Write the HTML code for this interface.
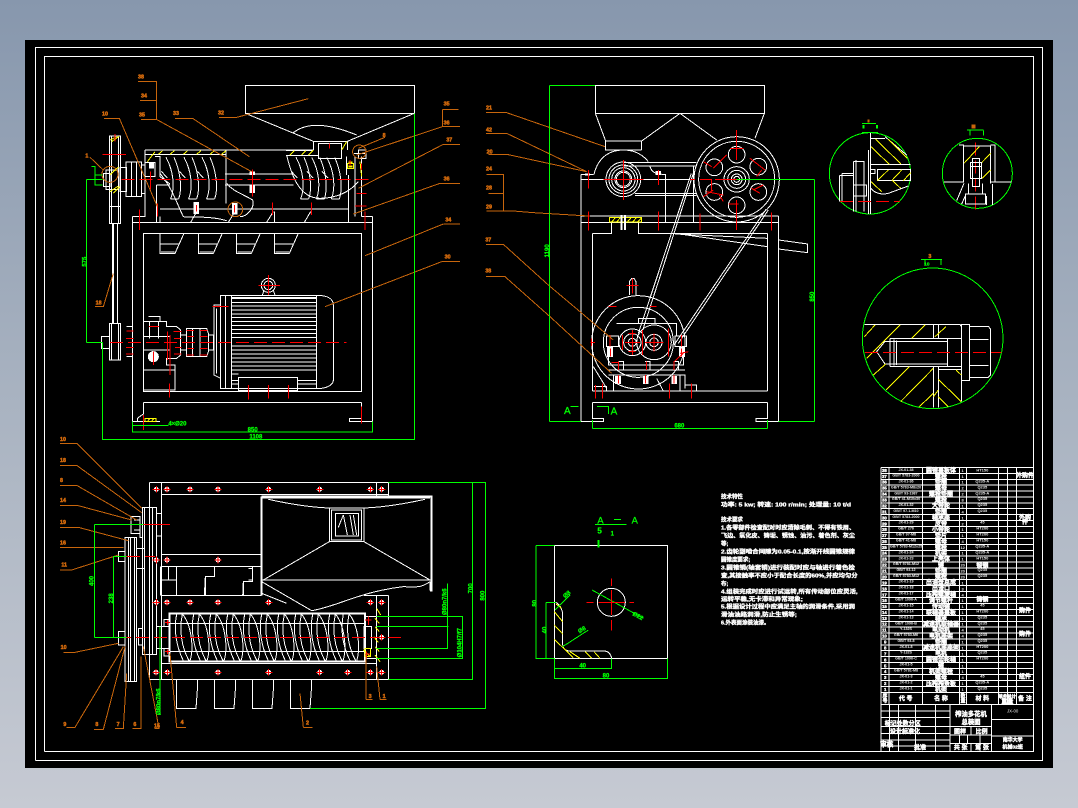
<!DOCTYPE html>
<html><head><meta charset="utf-8"><title>装配图</title>
<style>
html,body{margin:0;padding:0;width:1078px;height:808px;overflow:hidden;background:linear-gradient(180deg,#8797ad 0%,#a9b3c1 50%,#c6cad3 100%)}
svg{position:absolute;left:0;top:0;display:block}
svg *{vector-effect:non-scaling-stroke}
path,circle,rect,ellipse{fill:none;stroke-width:1;shape-rendering:crispEdges}
.w{stroke:#fff}.r{stroke:#f00}.g{stroke:#0f0}.o{stroke:#c8660c}.y{stroke:#ff0}
.d{stroke-dasharray:13 5}
.fw{fill:#fff;stroke:#fff}
text{font-family:"Liberation Sans","Noto Sans CJK SC",sans-serif;font-weight:bold}
.tg{fill:#0f0;stroke:#0f0;stroke-width:.25px;font-size:18px}
.to{fill:#d0680c;stroke:#d0680c;stroke-width:.5px;font-size:16px}
.tw{fill:#fff;stroke:#fff;stroke-width:.35px;font-size:16.5px}
.s{fill:#e8e8e8;font-size:11px;font-weight:normal}
.n{fill:#fff;stroke:#fff;stroke-width:.4px;font-size:18px;text-anchor:middle}
.m{text-anchor:middle}
</style></head>
<body>
<svg width="1078" height="808" viewBox="0 0 1078 808" xmlns="http://www.w3.org/2000/svg">
<defs>
<g id="b"><circle cx="0" cy="0" r="6" style="fill:#fff;stroke:#fff"/><path class="r" d="M-11,0H11M0,-10V10"/></g>
<g id="f"><path class="w" d="M0,0C22,40 28,90 14,125M24,0C42,40 50,90 38,125M-14,42L4,62M14,125L38,125"/></g>
<g id="h"><path class="w" d="M5,0C-5,50 5,100 25,140M22,0C12,50 20,100 42,140M22,0C48,30 58,100 45,140"/></g>
<g id="t"><path class="w" d="M0,0V60H45L72,0M0,32H58M3,56H44"/></g>
<g id="tr"><path class="w" d="M0,0V85H58L62,30V0"/></g>
</defs>
<rect x="25" y="40" width="1028" height="728" style="fill:#000;stroke:none"/>
<path class="w" d="M35.5,760.5V47.5H1042.5V760.5H35.5"/>
<path class="w" d="M44.5,751.5V56.5H1033.5V751.5H44.5"/>

<!-- LEFT VIEW -->
<g transform="translate(60,60) scale(.33333)">
<path class="w" d="M556,76H1063V160H556ZM556,160L760,244M1063,160L862,244M700,218C730,195 780,180 890,225M760,244V270M862,244V270M760,244H862M775,250H845V295H775Z"/>
<path class="w" d="M255,270H760M255,283H498M678,272H760M678,286H775M255,270V470H217M498,270V430"/>
<path class="w" d="M148,228H182V490H148ZM155,228V490M175,228V490M148,440H182M157,490V790M161,490V790M173,490V790M148,790H182V900H148ZM155,790V900M175,790V900"/>
<path class="w" d="M130,340H150V380H130ZM138,330H175V388H138ZM180,322H200V395H180ZM198,306H245V410H198ZM215,306V410M230,306V410M245,315H255V400H245M255,308H285V350H255M285,290H300V350L330,372M289,375H330M289,375V487M300,447H865M300,470V487"/>
<use href="#f" x="318" y="292"/><use href="#f" x="372" y="292"/><use href="#f" x="426" y="292"/>
<use href="#f" x="708" y="292"/><use href="#f" x="755" y="292"/><use href="#f" x="800" y="292"/>
<path class="w" d="M300,340C340,390 350,430 370,470C395,475 440,465 500,482M495,342H700M495,375H700M500,370C520,395 545,400 578,420C585,445 560,470 540,470M680,285C695,350 720,415 780,415C830,415 870,395 895,365M860,290V345M885,290V470M905,290V470M865,345V487M895,270H918V295H895ZM882,280H915"/>
<path class="w" d="M644,455V487M620,487L640,455M733,487L752,455M392,487L410,455M505,487L525,455M217,487H938M938,470H905M217,470V1085M938,470V1085M250,520H905V995H250Z"/>
<use href="#t" x="300" y="520"/><use href="#t" x="415" y="520"/><use href="#t" x="529" y="520"/><use href="#t" x="643" y="520"/>
<!-- motor -->
<path class="w" d="M482,706H770C800,706 820,715 820,735V960C820,975 800,986 770,986H482ZM496,706V986M514,706V986M770,706V986M482,735H462V945L482,955M470,745V940M535,952H712V992H535ZM607,706L612,690M645,706L640,690"/>
<path class="w" d="M514,712H770M514,716H770M514,727H770M514,738H770M514,750H770M514,762H770M514,773H770M514,785H770M514,797H770M514,808H770M514,820H770M514,832H770M514,858H770M514,870H770M514,882H770M514,894H770M514,906H770M514,918H770M514,930H770M514,942H535M712,962H770M712,972H770M514,962H535M514,972H535"/>
<circle class="w" cx="625" cy="676" r="21"/><circle class="w" cx="625" cy="676" r="13"/>
<path class="w" d="M250,785H320V800H350L362,810V885L350,895H320V915H345V990H250M250,830H330M250,870H330M250,930H345M250,790V995M268,785V835M295,785V835M265,770H300V785M380,805H440L445,820V875L440,890H380ZM398,805V890M420,805V890M445,825H460V870H445M362,825H380V870H362M200,800H217V890H200M125,830H148V866H125Z"/>
<circle class="fw" cx="280" cy="890" r="15"/>
<!-- lower frame -->
<path class="w" d="M250,995H905M250,1027H905M250,1027V1062L232,1075V1085M905,1027V1075H868V1085H938M217,1085H300"/>
<rect class="fw" x="402" y="428" width="14" height="32"/><rect class="fw" x="517" y="430" width="14" height="32"/><rect class="fw" x="570" y="378" width="14" height="20"/><rect class="fw" x="570" y="336" width="14" height="8"/><rect class="fw" x="268" y="310" width="12" height="14"/>
<path class="y" d="M255,1075H288V1085H255ZM262,1085L270,1075M274,1085L282,1075M150,240L170,230M155,245L178,228M155,340L175,322M150,345L170,325M150,395L175,378M160,400L180,380M262,305L285,275M295,283L308,272M330,283L343,272M370,283L383,272M410,283L423,272M450,283L463,272M485,283L498,272M690,285L703,272M725,285L738,272M745,285L760,270M845,270L860,245M862,310H880V325H862ZM900,305L905,350"/>
<path class="y" style="stroke-width:2" d="M865,308H878M865,320H878"/>
<path class="r d" d="M185,358H935M150,847H860"/>
<path class="r" d="M128,283H198M165,222V245M577,328V410M272,335V388M238,448V510M292,430V470M637,427V465M754,427V465M915,455V510M885,438H920M890,400H920M905,310V330M625,645V705M595,676H660M458,740H505M565,975V1018M625,975V1015M685,975V1015M328,970V1012M330,825V945M322,815V900M200,813H220M198,836H220M198,862H220M198,882H220M340,815H365M342,835H365M345,862H365M342,882H365M380,812H402M382,830H402M382,865H402M380,885H402M420,812H442M420,830H442M420,865H442M420,885H442M267,800H297M280,875V915M250,1065V1110M905,1040V1090M808,250V265M870,300V318M409,435V455M523,435V458"/>
<circle class="o" cx="150" cy="343" r="24"/><circle class="o" cx="526" cy="448" r="22"/><circle class="o" cx="898" cy="275" r="20"/>
<path class="o" d="M234,64H289V178M240,122H289M243,178H289L575,335M345,175H398L568,290M477,172H530L745,116M132,175H178L292,440M90,292L130,330M1147,148H1195M1147,148V200H1200M1147,200L890,285M975,232L895,265M1150,253H1200M1150,253L895,385M1140,370H1200M1140,370L880,462M1150,492H1200M1150,492L915,587M1145,605H1200M1145,605L795,740M105,740H130L160,640M0,1150H50L100,1200"/>
<g class="to"><text x="234" y="56">38</text><text x="243" y="112">34</text><text x="237" y="170">35</text><text x="339" y="165">33</text><text x="474" y="163">32</text><text x="126" y="166">10</text><text x="76" y="293">1</text><text x="1151" y="136">35</text><text x="1151" y="193">36</text><text x="968" y="231">8</text><text x="1159" y="244">37</text><text x="1151" y="361">36</text><text x="1156" y="485">34</text><text x="1154" y="595">30</text><text x="107" y="733">18</text><text x="0" y="1143">10</text></g>
<path class="g" d="M80,358V847M80,358H128M80,847H128M128,847V1138H1063V160M217,1085V1116H938V1085M217,1096H325M95,320H105V375H128M106,345H128"/>
<g class="tg"><text transform="translate(80,620) rotate(-90)">575</text><text x="325" y="1096">4×Ø20</text><text x="563" y="1115">850</text><text x="568" y="1136">1108</text></g>
</g>

<!-- FRONT VIEW -->
<g transform="translate(470,60) scale(.33333)">
<path class="w" d="M376,76H883V160H376ZM376,160L407,243M883,160L855,235M630,160L515,243M630,160L740,240M407,243H515V270M407,243V270H515M372,343C385,290 420,270 460,270C490,270 515,280 535,305M460,307H680M460,318H680M495,400H680M495,407H680M540,320C545,335 555,343 580,343H587V487"/>
<path class="w" d="M333,343H370M333,343V1084M925,468V1084M333,487H925M333,468H925M333,358H670M670,318V487M367,520H425V487M505,487V520H892M367,520V993M892,520V993M367,993H892M367,1027H892M367,1027V1075H400V1084H333M892,1027V1075H858V1084H925M615,522L892,535M630,522L892,560M926,540L1013,552V578L926,567"/>
<circle class="w" cx="460" cy="358" r="52"/><circle class="w" cx="460" cy="358" r="43"/><circle class="w" cx="460" cy="358" r="35"/><circle class="w" cx="460" cy="358" r="25"/><circle class="w" cx="460" cy="358" r="21"/>
<circle class="w" cx="800" cy="358" r="128"/><circle class="w" cx="800" cy="358" r="114"/>
<circle class="w" cx="800" cy="358" r="38"/><circle class="w" cx="800" cy="358" r="27"/><circle class="w" cx="800" cy="358" r="16"/><circle class="w" cx="800" cy="358" r="9"/>
<circle class="w" cx="800" cy="284" r="25"/><circle class="w" cx="733" cy="322" r="25"/><circle class="w" cx="733" cy="396" r="25"/><circle class="w" cx="800" cy="436" r="25"/><circle class="w" cx="865" cy="396" r="25"/><circle class="w" cx="865" cy="320" r="25"/>
<path class="w" d="M670,340L515,820M664,340L505,820M895,450L625,850M888,448L612,855"/>
<path class="w" d="M478,705V665L485,655H492L498,665V705"/>
<circle class="w" cx="505" cy="847" r="140"/><circle class="w" cx="505" cy="847" r="105"/>
<circle class="w" cx="552" cy="847" r="52"/><circle class="w" cx="552" cy="847" r="24"/><circle class="w" cx="552" cy="847" r="13"/>
<circle class="w" cx="487" cy="847" r="40"/><circle class="w" cx="487" cy="847" r="26"/><circle class="w" cx="487" cy="847" r="12"/>
<path class="w" d="M440,790H620V830M410,828H445V860H410ZM615,828H650V860H615ZM415,860V915H640V860M415,915H640M415,930H645M415,945H645V985M430,945V993M630,945V993M560,955L580,993M445,905H460V930M610,905H625V930M525,905H540V930M505,790V775H555V790M645,975H680V993M372,980H410V993M370,920L410,985"/>
<rect class="fw" x="412" y="862" width="16" height="28"/><rect class="fw" x="628" y="862" width="16" height="28"/><rect class="fw" x="437" y="950" width="14" height="20"/><rect class="fw" x="520" y="950" width="14" height="20"/><rect class="fw" x="606" y="950" width="14" height="20"/><rect class="fw" x="558" y="335" width="14" height="8"/>
<path class="y" d="M418,472H515V486H418ZM425,486L437,472M440,486L452,472M472,486L484,472M488,486L500,472M503,486L515,474"/>
<path class="w" style="stroke-width:2" d="M455,465V510M465,465V510M345,343H360"/>
<path class="r" d="M460,300V420M400,358H520M800,210V300M800,420V510M660,358H675M735,358H865M690,358L725,358V395M710,395L760,405M730,325L770,285M700,305L725,320M775,432H805M780,265H820M840,295L885,330M845,385L870,400M850,390L880,375M860,350L875,330M700,410L730,390M748,405L760,425M355,330V385M565,330V375M355,455V512M565,455V512M690,460V512M904,457V512M350,468H360M362,847H375M365,835V858M487,810V885M465,847H510M475,820H497M475,875H497M457,825V870M552,820V875M525,847H580M518,810V885M596,805V890M595,845V870M420,825V860M635,825V860M422,865V890M635,865V890M425,907H445M445,905V930M530,905V930M612,905V930M376,975V1015M397,970V1015M598,970V1015M664,970V1015M445,945V970M527,945V970M612,945V970M470,677H505M487,655V700M415,740H440M540,740H560M630,880L655,875M612,905L640,880"/>
<path class="o" d="M48,157H107L405,260M48,220H110L350,335M55,284H115L350,335M50,343H100V453M55,400H100M50,453H130L190,458L355,468M48,553H100L235,675L330,755L430,840M48,650H105L240,770L425,940"/>
<g class="to"><text x="48" y="149">21</text><text x="48" y="214">42</text><text x="50" y="280">20</text><text x="48" y="332">24</text><text x="48" y="388">28</text><text x="48" y="445">29</text><text x="46" y="545">37</text><text x="46" y="638">38</text></g>
<path class="g" d="M238,76V1084M238,76H375M238,1084H333M1033,358V1084M800,358H1033M925,1084H1033M367,1105H892M367,1080V1105M892,1080V1105M302,1040H326M381,1040H415V1062"/>
<g class="tg"><text transform="translate(237,592) rotate(-90)">1190</text><text transform="translate(1032,725) rotate(-90)">850</text><text x="613" y="1103">680</text><text x="282" y="1062" style="font-size:30px;font-weight:normal">A</text><text x="422" y="1064" style="font-size:30px;font-weight:normal">A</text></g>
</g>

<!-- TOP VIEW -->
<g transform="translate(60,450) scale(.33333)">
<path class="w" d="M268,97H985V137M268,97V688H985V437M304,97V688M949,97V137M304,133H985M304,313H605M304,349H605M304,437H605M949,437V688M912,437H985M304,640H949"/>
<path class="w" style="stroke-width:2" d="M605,140H1115V422H1110M605,140V437M605,143H1110"/>
<path class="w" d="M808,174H912V275H808ZM815,180H905V270H815ZM826,190H895V258H826ZM625,148C680,160 750,172 808,174M1095,148C1040,160 970,172 912,174M610,390L808,275M1110,390L912,275M605,390H1115M605,395L755,482C830,470 900,425 1030,410C1075,412 1085,412 1110,395M1110,395V422M605,430L680,460M835,232L850,195M850,195L862,255M870,195L880,255M880,195L890,255"/>
<path class="w" d="M302,349V437M302,390H350V437M350,349V437M325,349V390M433,437L436,380H463V349M436,380V437M463,380H436M548,437L550,395H578V349M550,395V437M566,355H578V390H566"/>
<path class="w" style="stroke-width:2" d="M328,490H915V634H328Z"/>
<use href="#h" x="345" y="492"/><use href="#h" x="396" y="492"/><use href="#h" x="447" y="492"/><use href="#h" x="498" y="492"/><use href="#h" x="549" y="492"/><use href="#h" x="600" y="492"/><use href="#h" x="651" y="492"/><use href="#h" x="702" y="492"/><use href="#h" x="753" y="492"/><use href="#h" x="804" y="492"/><use href="#h" x="845" y="492"/>
<path class="w" d="M330,520H912M330,605H912M912,500H950V625H912M912,530H935V595H912ZM312,508H330V530H312ZM312,595H330V618H312ZM300,530H330V595H300"/>
<path class="w" d="M247,172H290V614H247ZM253,172V614M268,172V614M278,172V614M290,190H304V258H290M213,200H240V250H213ZM222,210H240V240H222M240,200V262H247M205,262H230V695H205ZM195,262H205V695H195ZM212,262V695M224,262V695M230,295H253V355H230M175,305H195V335H175ZM175,545H195V585H175ZM235,535H247V585H235ZM290,530H300V595H290"/>
<path class="y" d="M950,475L962,495M945,505L958,520M945,530L958,545M942,560L955,578M945,590L958,605M945,615L960,635M910,600L930,620M915,595H932V620H915Z"/>
<use href="#tr" x="350" y="690"/><use href="#tr" x="464" y="690"/><use href="#tr" x="578" y="690"/><use href="#tr" x="692" y="690"/>
<use href="#b" x="289" y="118"/><use href="#b" x="321" y="118"/><use href="#b" x="390" y="118"/><use href="#b" x="474" y="118"/><use href="#b" x="626" y="118"/><use href="#b" x="779" y="118"/><use href="#b" x="931" y="118"/><use href="#b" x="965" y="118"/>
<use href="#b" x="321" y="330"/><use href="#b" x="474" y="330"/><use href="#b" x="289" y="330"/>
<use href="#b" x="289" y="457"/><use href="#b" x="321" y="457"/><use href="#b" x="390" y="457"/><use href="#b" x="474" y="457"/><use href="#b" x="626" y="457"/><use href="#b" x="931" y="457"/><use href="#b" x="965" y="457"/>
<use href="#b" x="288" y="667"/><use href="#b" x="322" y="667"/><use href="#b" x="474" y="667"/><use href="#b" x="626" y="667"/><use href="#b" x="779" y="667"/><use href="#b" x="863" y="667"/><use href="#b" x="931" y="667"/><use href="#b" x="965" y="667"/>
<use href="#b" x="965" y="562"/>
<path class="r d" d="M120,562H1025"/>
<path class="r" d="M200,223H330M165,320H240M255,320H285M925,500V525M915,510H935M915,612H930M920,605V625M315,518H330M322,510V525M315,605H330M322,598V612"/>
<path class="o" d="M70,0L245,175M0,46H50L245,188M0,106H50L230,210M0,167H55L215,210M0,232H55L205,272M0,293H190M0,360H35L175,315M10,607H45L175,580M20,832H45L190,590M102,838H130L195,590M165,835H190L200,670M217,835H243V620M283,835H297L250,590M350,832H378M350,832L330,610M730,832H758M730,832L720,730M918,748H938M918,748V610M960,748H980M960,748L950,650"/>
<g class="to"><text x="0" y="36">18</text><text x="0" y="96">8</text><text x="0" y="156">14</text><text x="0" y="222">19</text><text x="0" y="283">16</text><text x="4" y="350">11</text><text x="2" y="597">10</text><text x="10" y="828">9</text><text x="106" y="828">8</text><text x="170" y="828">7</text><text x="220" y="828">6</text><text x="282" y="832">15</text><text x="362" y="822">4</text><text x="738" y="824">2</text><text x="926" y="744">3</text><text x="968" y="744">1</text></g>
<path class="g" d="M103,223V562M103,223H250M103,562H200M160,320V562M160,320H200M985,97H1276V775H750M1238,97V688H985M950,499H1207V625H950M950,529H1165M1162,400V595H950M300,530V795"/>
<g class="tg"><text transform="translate(101,408) rotate(-90)">400</text><text transform="translate(159,460) rotate(-90)">238</text><text transform="translate(1237,430) rotate(-90)">700</text><text transform="translate(1274,452) rotate(-90)">800</text><text transform="translate(1160,495) rotate(-90)">Ø80n7/k6</text><text transform="translate(1204,622) rotate(-90)">Ø104H7/f7</text><text transform="translate(302,795) rotate(-90)">Ø80n7/k6</text></g>
</g>

<!-- DETAIL CIRCLES -->
<g transform="translate(820,110) scale(.33333)">
<circle class="g" cx="150" cy="190" r="122"/><circle class="g" cx="472" cy="190" r="105"/><circle class="g" cx="338" cy="685" r="211"/>
<path class="w" d="M152,68V312M152,85H195M145,120V312M152,163H272M152,178H165V190H152M172,178H272V212H172ZM100,155H132V305M100,155V305M108,150V305M100,225H140V258H100ZM58,197V275M66,190V275M58,197H100M66,190H100M195,80L260,135M152,235C165,250 185,255 205,250L265,228"/>
<path class="y" d="M167,88L243,162M205,88L262,145M153,110L208,163M172,212L205,180M215,212L245,180M250,212L272,188M153,215L185,245M218,212L242,235"/>
<path class="r d" d="M60,274H240M466,98V300"/>
<path class="w" d="M417,105H430V218M430,108H512V220M512,105H525V218M372,216H430M512,216H575M451,157H484V205H451ZM458,145H478V230H458ZM451,170H484M436,252H497V282H436ZM445,220V252M488,220V252M432,220L410,272M437,255L425,282M500,258V285M517,222V285"/>
<path class="y" d="M432,160L478,110M486,205L512,180M486,157L512,130"/>
<path class="w" d="M133,643H420L424,650M424,643H448V811H424ZM448,649H505L512,658V795L505,802H448M448,688H505M448,766H505M210,685H424M210,769H424M210,685V769M222,688V767M230,692V765M195,694H382V762H195M195,694L170,725L195,762M382,685V770M340,643V685M355,643V685M340,770V893M355,770V893M424,811V875M355,778H424"/>
<path class="y" d="M133,680L165,645M140,745L240,645M275,685L315,645M345,680L378,650M160,795L197,762M198,840L268,770M242,875L340,775M298,890L340,850M355,808L424,875M355,860L385,890M340,860L355,840M408,780L424,795"/>
<path class="r d" d="M135,727H545"/>
<path class="g" d="M126,40H168M126,68H174M441,60H491M450,62V76M490,62V76M303,448H366M315,450V465M363,450V465"/>
<path class="g" style="stroke-width:2" d="M131,45V56M171,45V56"/>
<path class="o" style="stroke-width:2" d="M145,28V38M458,44V56M463,44V56"/>
<text class="to" x="325" y="444">3</text>
<text class="tg" x="312" y="466" style="font-size:15px">10</text>
</g>

<!-- SECTION A-A AND TECH TEXT -->
<g transform="translate(520,480) scale(.33333)">
<path class="w" d="M103,196H442V535H103ZM108,367C120,375 128,390 128,405V490C128,505 135,513 150,513H255C268,515 273,525 275,535"/>
<circle class="w" cx="274" cy="367" r="42"/>
<path class="y" d="M108,372L125,385M103,395L128,425M103,435L128,462M103,478L160,533M150,515L180,535M195,515L215,535M222,515L240,535"/>
<path class="g" d="M48,196H103M48,196V535H103M78,367H108M78,367V535M103,535V565H274V535M103,565V595H442V535M225,133H320M216,330L370,415M105,390L150,345M128,500L205,450M282,118H303"/>
<path class="g" style="stroke-width:2" d="M236,180V203"/>
<path class="r" d="M274,295V318M274,330V405M274,420V452M200,367H220M235,367H315M328,367H342"/>
<g class="tg"><text x="232" y="130" style="font-size:28px;font-weight:normal">A</text><text x="335" y="130" style="font-size:28px;font-weight:normal">A</text><text x="232" y="160" style="font-size:24px">5</text><text x="272" y="166">1</text><text transform="translate(50,380) rotate(-90)">80</text><text transform="translate(80,460) rotate(-90)">40</text><text x="178" y="563">40</text><text x="248" y="593">80</text><text x="135" y="355" transform="rotate(-40 135 355)">Ø8</text><text x="178" y="460" transform="rotate(-30 178 460)">Ø8</text><text x="336" y="405" transform="rotate(28 336 405)">Ø22</text></g>
<g class="tw">
<text x="603" y="55">技术特性</text>
<text x="603" y="80" textLength="390" lengthAdjust="spacingAndGlyphs">功率: 5 kw; 转速: 100 r/min; 处理量: 10 t/d</text>
<text x="603" y="124">技术要求</text>
<text x="603" y="149" textLength="402" lengthAdjust="spacingAndGlyphs">1.各零部件检查配对时应清除毛刺、不得有铁屑、</text>
<text x="603" y="172" textLength="402" lengthAdjust="spacingAndGlyphs">飞边、氧化皮、铸垢、锈蚀、油污、着色剂、灰尘</text>
<text x="603" y="196">等;</text>
<text x="603" y="220" textLength="402" lengthAdjust="spacingAndGlyphs">2.齿轮副啮合间隙为0.05-0.1,按渐开线圆锥规律</text>
<text x="603" y="245">圆锥度要求;</text>
<text x="603" y="268" textLength="402" lengthAdjust="spacingAndGlyphs">3.圆锥销(轴套销)进行装配时应与轴进行着色检</text>
<text x="603" y="292" textLength="410" lengthAdjust="spacingAndGlyphs">查,其接触率不应小于配合长度的60%,并应均匀分</text>
<text x="603" y="316">布;</text>
<text x="603" y="340" textLength="410" lengthAdjust="spacingAndGlyphs">4.组装完成时应进行试运转,所有传动部位应灵活,</text>
<text x="603" y="363" textLength="246" lengthAdjust="spacingAndGlyphs">运转平稳,无卡滞和异常现象;</text>
<text x="603" y="386" textLength="402" lengthAdjust="spacingAndGlyphs">5.根据设计过程中应满足主轴的润滑条件,采用润</text>
<text x="603" y="410" textLength="228" lengthAdjust="spacingAndGlyphs">滑油油路润滑,防止生锈等;</text>
<text x="603" y="434">6.外表面涂装油漆。</text>
</g>
</g>

<!-- PARTS TABLE -->
<g transform="translate(870,460) scale(.33333)">
<path class="w" d="M33,22H490M33,40H490M33,58H490M33,75H490M33,93H490M33,111H490M33,129H490M33,146H490M33,164H490M33,182H490M33,200H490M33,217H490M33,235H490M33,253H490M33,271H490M33,288H490M33,306H490M33,324H490M33,342H490M33,359H490M33,377H490M33,395H490M33,413H490M33,430H490M33,448H490M33,466H490M33,484H490M33,501H490M33,519H490M33,537H490M33,555H490M33,572H490M33,590H490M33,608H490M33,626H490M33,643H490M33,661H490M33,679H490M33,697H490M33,733H490"/>
<path class="w" d="M33,22V875M57,22V733M158,22V733M268,22V733M290,22V733M385,22V733M413,22V733M440,22V733M490,22V875"/>
<path class="w" d="M33,875H490M33,753H240M33,773H240M33,800H240M33,820H240M33,840H240M33,858H240M58,733V875M85,733V875M137,733V875M197,733V875M240,733V875M365,733V875M365,778H490M365,828H490M240,800H365M240,825H365M240,850H365M303,800V825M268,825V850M292,825V850M330,825V875M303,850V875"/>
<g class="tw" style="font-size:13px">
<text x="36" y="36">38</text><text x="36" y="54">37</text><text x="36" y="71">36</text><text x="36" y="89">35</text><text x="36" y="107">34</text><text x="36" y="125">33</text><text x="36" y="142">32</text><text x="36" y="160">31</text><text x="36" y="178">30</text><text x="36" y="196">29</text><text x="36" y="213">28</text><text x="36" y="231">27</text><text x="36" y="249">26</text><text x="36" y="267">25</text><text x="36" y="284">24</text><text x="36" y="302">23</text><text x="36" y="320">22</text><text x="36" y="338">21</text><text x="36" y="355">20</text><text x="36" y="373">19</text><text x="36" y="391">18</text><text x="36" y="409">17</text><text x="36" y="426">16</text><text x="36" y="444">15</text><text x="36" y="462">14</text><text x="36" y="480">13</text><text x="36" y="497">12</text><text x="36" y="515">11</text><text x="36" y="533">10</text><text x="42" y="551">9</text><text x="42" y="568">8</text><text x="42" y="586">7</text><text x="42" y="604">6</text><text x="42" y="622">5</text><text x="42" y="639">4</text><text x="42" y="657">3</text><text x="42" y="675">2</text><text x="42" y="693">1</text>
</g>
<g class="s m">
<text x="108" y="33">JX-01-38</text><text x="108" y="50">GB/T 5783-2000</text><text x="108" y="67">JX-01-36</text><text x="108" y="85">GB/T 5783-M8x20</text><text x="108" y="103">GB/T 93-1987</text><text x="108" y="120">GB/T 41-M10x30</text><text x="108" y="138">JX-01-32</text><text x="108" y="156">GB/T 97.1-M10</text><text x="108" y="174">GB/T 5783-2000</text><text x="108" y="191">JX-01-29</text><text x="108" y="209">GB/T 276</text><text x="108" y="227">GB/T 97-M8</text><text x="108" y="244">GB/T 41-M8</text><text x="108" y="262">GB/T 5783-M12x25</text><text x="108" y="280">JX-01-24</text><text x="108" y="298">JX-01-23</text><text x="108" y="315">GB/T 5781-M12</text><text x="108" y="333">GB/T 93-12</text><text x="108" y="351">GB/T 5783-M12</text><text x="108" y="368">JX-01-19</text><text x="108" y="386">JX-01-18</text><text x="108" y="404">JX-01-17</text><text x="108" y="422">GB/T 1096-A</text><text x="108" y="440">JX-01-15</text><text x="108" y="457">JX-01-14</text><text x="108" y="475">JX-01-13</text><text x="108" y="493">GB/T 1096-B</text><text x="108" y="510">Y-132S</text><text x="108" y="528">GB/T 5783-M6</text><text x="108" y="546">GB/T 93-8</text><text x="108" y="564">JX-01-8</text><text x="108" y="581">Y-132S</text><text x="108" y="599">GB/T 1096-C</text><text x="108" y="617">JX-01-5</text><text x="108" y="635">GB/T 5781-M8</text><text x="108" y="652">JX-01-3</text><text x="108" y="670">JX-01-2</text><text x="108" y="688">JX-01-1</text>
</g>
<g class="n">
<text x="213" y="37">圆锥盖板体</text><text x="213" y="55">螺栓</text><text x="213" y="72">垫圈</text><text x="213" y="90">螺母</text><text x="213" y="108">螺栓垫圈</text><text x="213" y="126">螺栓</text><text x="213" y="143">大带轮</text><text x="213" y="161">垫圈</text><text x="213" y="179">轴承座</text><text x="213" y="197">皮带</text><text x="213" y="214">小带轮</text><text x="213" y="232">垫片</text><text x="213" y="250">螺母</text><text x="213" y="268">螺栓</text><text x="213" y="285">机架</text><text x="213" y="303">上壳体</text><text x="213" y="321">键</text><text x="213" y="339">垫圈</text><text x="213" y="356">螺栓</text><text x="213" y="374">出油盘总成</text><text x="213" y="392">出渣口</text><text x="213" y="410">压榨螺旋轴</text><text x="213" y="427">调节螺杆</text><text x="213" y="445">传动键</text><text x="213" y="463">联轴器盖板</text><text x="213" y="481">轴承</text><text x="213" y="498">减速机联轴器</text><text x="213" y="516">电动机</text><text x="213" y="534">电机座架</text><text x="213" y="552">垫圈</text><text x="213" y="569">减速机底座架</text><text x="213" y="587">电机</text><text x="213" y="605">圆锥齿轮轴</text><text x="213" y="623">键</text><text x="213" y="640">机架螺栓</text><text x="213" y="658">螺母</text><text x="213" y="676">压榨榨条板</text><text x="213" y="694">机架</text>
</g>
<g class="s m" style="font-size:12px">
<text x="278" y="36">1</text><text x="278" y="54">1</text><text x="278" y="71">1</text><text x="278" y="89">2</text><text x="278" y="107">2</text><text x="278" y="125">8</text><text x="278" y="142">1</text><text x="278" y="160">4</text><text x="278" y="178">1</text><text x="278" y="196">2</text><text x="278" y="213">1</text><text x="278" y="231">1</text><text x="278" y="249">4</text><text x="278" y="267">12</text><text x="278" y="284">1</text><text x="278" y="302">1</text><text x="278" y="320">20</text><text x="278" y="338">20</text><text x="278" y="355">20</text><text x="278" y="373">1</text><text x="278" y="391">3</text><text x="278" y="409">4</text><text x="278" y="426">1</text><text x="278" y="444">1</text><text x="278" y="462">1</text><text x="278" y="480">1</text><text x="278" y="497">1</text><text x="278" y="515">4</text><text x="278" y="533">4</text><text x="278" y="551">1</text><text x="278" y="568">1</text><text x="278" y="586">1</text><text x="278" y="604">1</text><text x="278" y="622">1</text><text x="278" y="639">1</text><text x="278" y="657">4</text><text x="278" y="675">1</text><text x="278" y="693">1</text>
<text x="337" y="34">HT150</text><text x="337" y="67">Q235-A</text><text x="337" y="85">Q235</text><text x="337" y="103">Q235-A</text><text x="337" y="120">Q235</text><text x="337" y="138">Q235</text><text x="337" y="156">Q235</text><text x="337" y="191">45</text><text x="337" y="209">HT200</text><text x="337" y="227">HT200</text><text x="337" y="244">HT150</text><text x="337" y="262">Q235-A</text><text x="337" y="280">Q235-A</text><text x="337" y="298">HT150</text><text x="337" y="333">Q235</text><text x="337" y="351">Q235</text><text x="337" y="422">Q235</text><text x="337" y="440">45</text><text x="337" y="457">HT200</text><text x="337" y="475">Q235</text><text x="337" y="493">Q235</text><text x="337" y="510">45</text><text x="337" y="528">Q235</text><text x="337" y="546">Q235</text><text x="337" y="564">HT200</text><text x="337" y="581">Q235</text><text x="337" y="599">HT200</text><text x="337" y="652">45</text><text x="337" y="670">Q235-A</text><text x="337" y="688">Q235</text>
</g>
<g class="n">
<text x="337" y="322">锻钢</text><text x="337" y="425">铸钢</text>
<text x="465" y="52">外购件</text><text x="465" y="178">外购</text><text x="465" y="192">件</text><text x="465" y="458">购件</text><text x="465" y="528">购件</text><text x="465" y="655">组件</text>
<text x="45" y="712" style="font-size:15px">序</text><text x="45" y="727" style="font-size:15px">号</text>
<text x="107" y="722">代 号</text><text x="213" y="722">名 称</text><text x="279" y="712" style="font-size:15px">数</text><text x="279" y="727" style="font-size:15px">量</text><text x="337" y="722">材 料</text><text x="412" y="714" style="font-size:13px">单件总计</text><text x="412" y="730">重量</text><text x="465" y="722">备 注</text>
<text x="303" y="768" style="font-size:19px">榨油多花机</text><text x="303" y="792" style="font-size:19px">总装图</text>
<text x="270" y="820">图样</text><text x="335" y="820">比例</text><text x="272" y="868">共 张</text><text x="336" y="868">第 张</text><text x="428" y="845" style="font-size:15px">南华大学</text><text x="428" y="865" style="font-size:15px">机械02班</text>
<text x="98" y="796" style="font-size:18px">标记处数分区</text><text x="105" y="820" style="font-size:18px">设计标准化</text><text x="50" y="860" style="font-size:20px">审核</text><text x="150" y="868">批准</text>
</g>
<text class="s m" x="428" y="757" style="font-size:13px">JX-00</text>
</g>
</svg>
</body></html>
